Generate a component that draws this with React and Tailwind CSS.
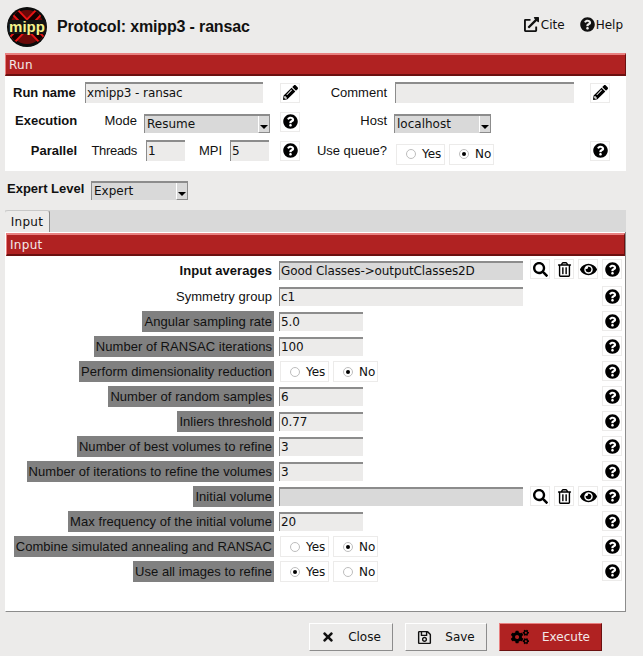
import { FaPencilAlt, FaQuestionCircle, FaSearch, FaRegTrashAlt, FaEye, FaTimes, FaRegSave, FaCogs, FaExternalLinkAlt } from 'react-icons/fa';

const sans = "font-['Liberation_Sans',Arial,sans-serif]";
const deja = "font-['DejaVu_Sans',sans-serif]";

function Logo() {
  return (
    <svg width="40" height="40" viewBox="0 0 40 40" className="shrink-0">
      <circle cx="20" cy="20" r="20" fill="#0b0b0b" />
      <circle cx="20" cy="20" r="17" fill="#6a0808" />
      <path d="M9 6 L34 32 M31 6 L6 32" stroke="#e81414" strokeWidth="9" />
      <path d="M9 6 L34 32 M31 6 L6 32" stroke="#160000" strokeWidth="5" />
      <rect x="1" y="13" width="38" height="14" fill="#141414" />
      <text x="20" y="25" textAnchor="middle" fontSize="15" fontWeight="700" fill="#f6f28c" fontFamily="Liberation Sans, sans-serif">mipp</text>
    </svg>
  );
}

function IconBtn({ icon: Icon, size = 15, className = '' }) {
  return (
    <div className={`flex h-5 w-5 shrink-0 items-center justify-center border border-[#ecebea] bg-white text-black ${className}`}>
      <Icon size={size} />
    </div>
  );
}

function Entry({ value = '', className = 'h-[19px]', bg = 'bg-[#ecebea]' }) {
  return (
    <div className={`flex items-center overflow-hidden border-t-2 border-l border-t-[#8c8c8c] border-l-[#8c8c8c] pb-px pl-px text-[12px] leading-none tracking-[-0.1px] text-[#111] ${deja} ${bg} ${className}`}>
      {value}
    </div>
  );
}

function Select({ value, className = '' }) {
  return (
    <div className={`flex h-[19px] items-stretch border-t-2 border-l border-t-[#8c8c8c] border-l-[#8c8c8c] bg-[#d9d9d9] text-[12px] text-[#111] ${deja} ${className}`}>
      <span className="flex-1 pl-0.5 leading-[17px]">{value}</span>
      <span className="flex w-3 items-end justify-center border-b border-r border-b-[#8c8c8c] border-r-[#8c8c8c] border-l border-l-white bg-[#d9d9d9] pb-[3px]">
        <span className="h-0 w-0 border-x-[4px] border-t-[4px] border-x-transparent border-t-black" />
      </span>
    </div>
  );
}

function Radio({ label, checked, className = '' }) {
  return (
    <div className={`flex h-[21px] items-center border border-[#ecebea] bg-white pl-[9px] text-[12px] text-[#111] ${deja} ${className}`}>
      <span className="flex h-2.5 w-2.5 items-center justify-center rounded-full border border-[#bdbdbd] bg-white">
        {checked && <span className="h-1 w-1 rounded-full bg-black" />}
      </span>
      <span className="ml-[6px]">{label}</span>
    </div>
  );
}

function YesNo({ value, className = '' }) {
  return (
    <div className={`flex gap-1 ${className}`}>
      <Radio label="Yes" checked={value === 'yes'} className="w-[49px]" />
      <Radio label="No" checked={value === 'no'} className="w-[45px]" />
    </div>
  );
}

function Bar({ title, className = '' }) {
  return (
    <div className={`flex h-[23px] items-center border-t-2 border-l border-b-2 border-r border-t-[#e98080] border-l-[#e98080] border-b-[#6b1010] border-r-[#6b1010] bg-[#b02222] pl-[3px] text-[12px] tracking-[0.3px] text-[#f3e9e9] ${deja} ${className}`}>
      {title}
    </div>
  );
}

function Label({ text, expert, bold }) {
  return (
    <div className="flex justify-end">
      <span className={`flex h-[21px] items-center px-[2px] text-[13px] tracking-[0.05px] text-[#111] ${sans} ${expert ? 'bg-[#808080]' : ''} ${bold ? 'font-bold' : ''}`}>
        {text}
      </span>
    </div>
  );
}

const rows = [
  { label: 'Input averages', bold: true, value: 'Good Classes->outputClasses2D', wide: true, dark: true, tools: true },
  { label: 'Symmetry group', value: 'c1', wide: true },
  { label: 'Angular sampling rate', expert: true, value: '5.0' },
  { label: 'Number of RANSAC iterations', expert: true, value: '100' },
  { label: 'Perform dimensionality reduction', expert: true, radio: 'no' },
  { label: 'Number of random samples', expert: true, value: '6' },
  { label: 'Inliers threshold', expert: true, value: '0.77' },
  { label: 'Number of best volumes to refine', expert: true, value: '3' },
  { label: 'Number of iterations to refine the volumes', expert: true, value: '3' },
  { label: 'Initial volume', expert: true, value: '', wide: true, dark: true, tools: true },
  { label: 'Max frequency of the initial volume', expert: true, value: '20' },
  { label: 'Combine simulated annealing and RANSAC', expert: true, radio: 'no' },
  { label: 'Use all images to refine', expert: true, radio: 'yes' },
];

function FormRow({ row }) {
  // the first row sits a little taller than the others
  const lift = row.bold ? 'mb-[3px]' : 'mb-px';
  return (
    <div className={`grid grid-cols-[268px_1fr_20px] items-center ${row.bold ? 'h-[27px]' : 'h-[25px]'}`}>
      <Label text={row.label} expert={row.expert} bold={row.bold} />
      <div className="flex items-center pl-[5px]">
        {row.radio ? (
          <YesNo value={row.radio} className="pl-px" />
        ) : (
          <Entry
            value={row.value}
            bg={row.dark ? 'bg-[#d9d9d9]' : 'bg-[#ecebea]'}
            className={row.wide ? 'h-[19px] w-[244px]' : 'h-[19px] w-[84px]'}
          />
        )}
        {row.tools && (
          <div className={`ml-auto mr-1 flex gap-1 ${lift}`}>
            <IconBtn icon={FaSearch} />
            <IconBtn icon={FaRegTrashAlt} />
            <IconBtn icon={FaEye} size={17} />
          </div>
        )}
      </div>
      <IconBtn icon={FaQuestionCircle} className={lift} />
    </div>
  );
}

function RunPanel() {
  return (
    <section className="mx-[5px] w-[621px]">
      <Bar title="Run" />
      <div className={`h-[95px] bg-white pt-[6px] text-[13px] text-[#111] ${sans}`}>
        <div className="flex h-[21px] items-center">
          <span className="ml-2 mt-px w-[72px] font-bold">Run name</span>
          <Entry value="xmipp3 - ransac" className="h-[21px] w-[178px]" />
          <div className="ml-[17px]"><IconBtn icon={FaPencilAlt} /></div>
          <span className="w-[87px] text-right">Comment</span>
          <Entry className="ml-2 h-[21px] w-[179px]" />
          <div className="ml-4"><IconBtn icon={FaPencilAlt} /></div>
        </div>
        <div className="mt-[7px] flex h-[21px] items-center">
          <span className="ml-2.5 w-[62px] font-bold">Execution</span>
          <span className="w-[60px] text-right">Mode</span>
          <Select value="Resume" className="ml-[7px] mt-[5px] w-[126px]" />
          <div className="ml-2.5 mt-0.5"><IconBtn icon={FaQuestionCircle} /></div>
          <span className="w-[87px] text-right">Host</span>
          <Select value="localhost" className="ml-[7px] mt-[5px] w-[97px]" />
        </div>
        <div className="mt-2 flex h-[21px] translate-y-px items-center">
          <span className="w-[72px] text-right font-bold">Parallel</span>
          <span className="w-[60px] text-right tracking-[-0.3px]">Threads</span>
          <Entry value="1" className="ml-[9px] h-[21px] w-[39px]" />
          <span className="w-[37px] text-right">MPI</span>
          <Entry value="5" className="ml-2 h-[21px] w-[39px]" />
          <div className="ml-[11px]"><IconBtn icon={FaQuestionCircle} /></div>
          <span className="w-[87px] text-right">Use queue?</span>
          <YesNo value="no" className="ml-[9px] mt-[7px]" />
          <div className="ml-[96px]"><IconBtn icon={FaQuestionCircle} /></div>
        </div>
      </div>
    </section>
  );
}

function FootBtn({ icon: Icon, label, size = 14, className = '', iconClass = '' }) {
  return (
    <div className={`flex h-7 items-center justify-center border text-[12px] ${deja} ${className}`}>
      <Icon size={size} className={iconClass} />
      <span className="ml-[13px]">{label}</span>
    </div>
  );
}

export default function App() {
  return (
    <div className="h-[656px] w-[643px] overflow-hidden bg-[#ecebea]">
      <header className="flex h-[53px] items-center pl-[7px]">
        <Logo />
        <h1 className={`ml-2.5 text-[16px] font-bold tracking-[-0.15px] text-[#111] ${sans}`}>Protocol: xmipp3 - ransac</h1>
        <div className={`mb-1 ml-auto mr-5 flex items-center gap-[15px] text-[12px] text-[#111] ${deja}`}>
          <span className="flex items-center gap-0.5"><FaExternalLinkAlt size={15} />Cite</span>
          <span className="flex items-center gap-px"><FaQuestionCircle size={15} />Help</span>
        </div>
      </header>

      <RunPanel />

      <div className={`flex h-[39px] items-start pl-[7px] pt-2.5 text-[13px] text-[#111] ${sans}`}>
        <span className="-mt-0.5 w-[84px] font-bold">Expert Level</span>
        <Select value="Expert" className="w-[97px]" />
      </div>

      <section className="mx-[5px] w-[621px]">
        <div className="h-[22px] bg-[#d9d9d9]">
          <div className={`flex h-[22px] w-[45px] items-center justify-center rounded-t-[3px] border-r border-t border-[#8c8c8c] border-t-[#c8c8c8] bg-[#ecebea] text-[12px] tracking-[0.3px] text-[#111] ${deja}`}>
            Input
          </div>
        </div>
        <div className="h-[380px] border-b border-r border-l border-b-[#8c8c8c] border-r-[#8c8c8c] border-l-white bg-white pt-px">
          <Bar title="Input" />
          <div className="pb-1 pr-[3px] pt-px">
            {rows.map((row) => (
              <FormRow key={row.label} row={row} />
            ))}
          </div>
        </div>
      </section>

      <footer className="mt-[11px] flex pl-[309px]">
        <FootBtn icon={FaTimes} label="Close" className="w-[84px] border-white border-b-[#8c8c8c] border-r-[#8c8c8c] bg-[#ecebea] text-[#111]" />
        <FootBtn icon={FaRegSave} label="Save" size={15} className="ml-3 w-[82px] border-white border-b-[#8c8c8c] border-r-[#8c8c8c] bg-[#ecebea] text-[#111]" />
        <FootBtn icon={FaCogs} label="Execute" size={18} iconClass="text-black" className="ml-3 w-[103px] border-[#e98080] border-b-[#6b1010] border-r-[#6b1010] bg-[#b02222] text-[#f3e9e9]" />
      </footer>
    </div>
  );
}
